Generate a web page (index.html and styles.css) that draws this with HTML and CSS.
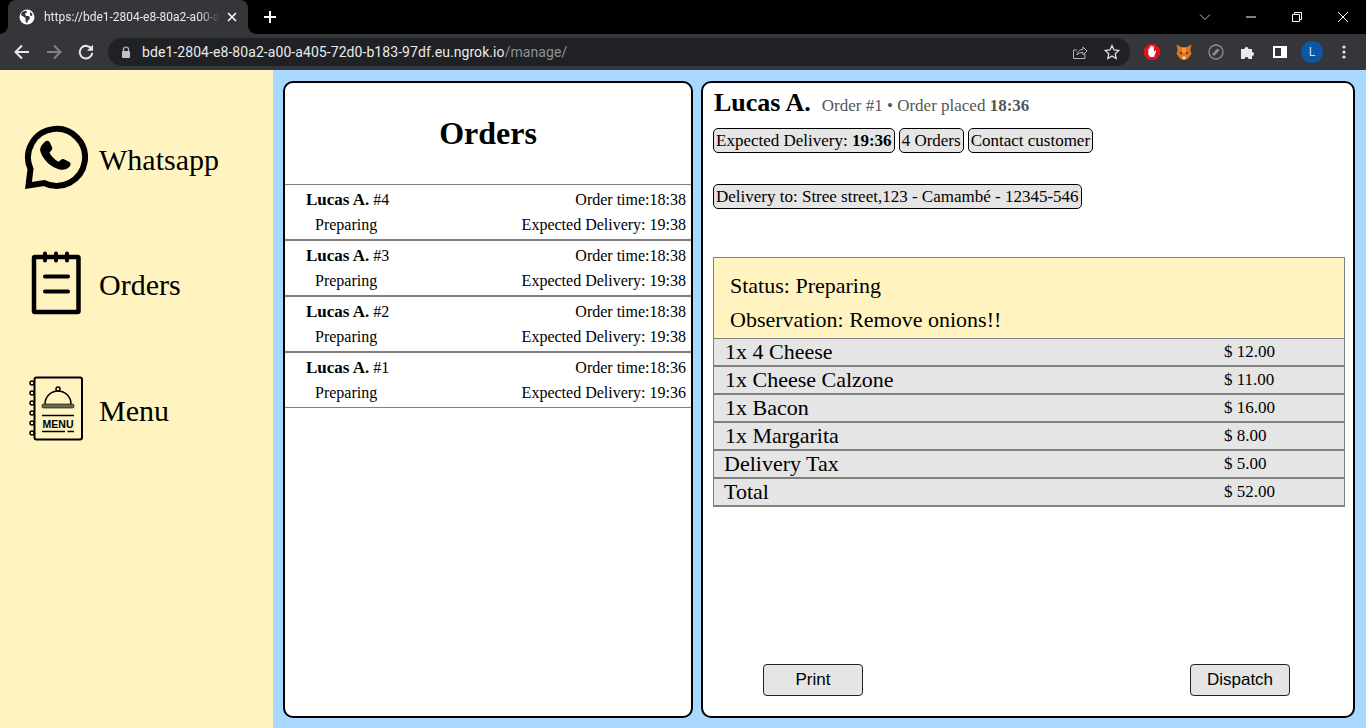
FILE: index.html
```html
<!DOCTYPE html>
<html lang="en">
<head>
  <meta charset="UTF-8" />
  <title>Manage</title>
  <link rel="stylesheet" href="styles.css">
</head>
<body>

  <!-- Browser chrome -->
  <div class="tabstrip">
    <div class="tab">
      <svg class="favicon" width="16" height="16" viewBox="0 0 16 16"><circle cx="8" cy="8" r="7.5" fill="#fff"/><path d="M7 1.500 3 3 2 6l3 2 1.500 1v3l1.500 2.500 1-3 2-2-1-2.500H7L6 4.500l2-1z" fill="#35363a"/><path d="M11 3l2.500 2-.5 2-2-.5z" fill="#35363a"/></svg>
      <span class="tab-title">https://bde1-2804-e8-80a2-a00-a</span>
      <svg class="tab-close" width="10" height="10" viewBox="0 0 10 10"><path d="M1 1l8 8M9 1L1 9" stroke="#fff" stroke-width="1.600"/></svg>
    </div>
    <svg class="new-tab" width="14" height="14" viewBox="0 0 14 14"><path d="M7 1v12M1 7h12" stroke="#fff" stroke-width="2"/></svg>
    <div class="window-btns">
      <div class="win-btn"><svg width="12" height="8" viewBox="0 0 12 8"><path d="M1 1.500l5 5 5-5" fill="none" stroke="#bbb"/></svg></div>
      <div class="win-btn"><svg width="12" height="12" viewBox="0 0 12 12"><path d="M1 6h10" stroke="#fff"/></svg></div>
      <div class="win-btn"><svg width="12" height="12" viewBox="0 0 12 12"><path d="M1.500 3.500h7v7h-7zM3.500 3.500v-2h7v7h-2" fill="none" stroke="#fff"/></svg></div>
      <div class="win-btn"><svg width="12" height="12" viewBox="0 0 12 12"><path d="M1 1l10 10M11 1L1 11" stroke="#fff"/></svg></div>
    </div>
  </div>

  <div class="toolbar">
    <div class="tool-btn"><svg width="16" height="16" viewBox="0 0 16 16"><path d="M15 8H2M8 1.500 1.500 8 8 14.500" fill="none" stroke="#e8eaed" stroke-width="2"/></svg></div>
    <div class="tool-btn"><svg width="16" height="16" viewBox="0 0 16 16"><path d="M1 8h13M8 1.500 14.500 8 8 14.500" fill="none" stroke="#7f8184" stroke-width="2"/></svg></div>
    <div class="tool-btn"><svg width="16" height="16" viewBox="0 0 16 16"><path d="M13.500 5A6.300 6.300 0 1 0 14.300 9" fill="none" stroke="#e8eaed" stroke-width="2"/><path d="M15 .8v6H9z" fill="#e8eaed"/></svg></div>

    <div class="omnibox">
      <svg class="lock" width="10" height="13" viewBox="0 0 10 13"><path d="M2.500 5V3.500a2.500 2.500 0 0 1 5 0V5" fill="none" stroke="#bdc1c6" stroke-width="1.200"/><rect x="1" y="5" width="8" height="7" rx="1" fill="#bdc1c6"/></svg>
      <span class="url">bde1-2804-e8-80a2-a00-a405-72d0-b183-97df.eu.ngrok.io<span class="url-path">/manage/</span></span>
      <svg class="omni-share" width="16" height="16" viewBox="0 0 16 16"><path d="M13 10v4.500H1.500V6H5" fill="none" stroke="#b4b6b9"/><path d="M5 11c.5-4 3-5.500 6-5.500V3l4 4-4 4V8.500c-3 0-4.500.5-6 2.500z" fill="none" stroke="#b4b6b9"/></svg>
      <svg class="omni-star" width="16" height="16" viewBox="0 0 16 16"><path d="M8 1.500l2 4.500 4.800.5-3.600 3.200 1 4.800L8 12.100l-4.200 2.400 1-4.800L1.200 6.500 6 6z" fill="none" stroke="#dcdde0" stroke-width="1.300"/></svg>
    </div>

    <div class="tool-btn"><svg width="16" height="16" viewBox="0 0 16 16"><path d="M5 0h6l5 5v6l-5 5H5l-5-5V5z" fill="#e6121b"/><path d="M4.300 8.500V5.200a.7.700 0 0 1 1.400 0V2.900a.7.700 0 0 1 1.400 0V2.300a.7.700 0 0 1 1.400 0V3a.7.700 0 0 1 1.400 0v5l.9-1.200c.6-.7 1.600-.1 1.200.7L10 13H6.200L4.300 10.500z" fill="#fff"/></svg></div>
    <div class="tool-btn"><svg width="16" height="16" viewBox="0 0 16 16"><path d="M.5.500 6 3.500h4L15.500.500 14.300 6 15.500 9.500 13.500 13l-3 2.500h-5L2.500 13 .5 9.500 1.700 6z" fill="#e2761b"/><path d="M3.500 8l2.800.5-1 2zM12.500 8l-2.800.5 1 2z" fill="#3a2a20"/><path d="M6 3.500h4L9.300 9H6.700z" fill="#f6a04d"/><path d="M6 12.500h4l-1 3H7z" fill="#e8d8c8"/></svg></div>
    <div class="tool-btn"><svg width="16" height="16" viewBox="0 0 16 16"><circle cx="8" cy="8" r="7" fill="none" stroke="#8c8e91" stroke-width="1.300"/><path d="M5 11l5.500-5.500" stroke="#8c8e91" stroke-width="2.600"/></svg></div>
    <div class="tool-btn"><svg width="16" height="16" viewBox="0 0 16 16"><path d="M1 5h3.500a2 2 0 1 1 4 0H12v3a2 2 0 1 1 0 4v3H8.500a2 2 0 1 0-4 0H1z" fill="#e8eaed"/></svg></div>
    <div class="tool-btn"><svg width="14" height="12" viewBox="0 0 14 12"><path d="M0 0h14v12H0z" fill="#fff"/><path d="M2 2h6v8H2z" fill="#35363a"/></svg></div>
    <div class="tool-btn"><span class="avatar">L</span></div>
    <div class="tool-btn"><svg width="4" height="14" viewBox="0 0 4 14"><circle cx="2" cy="2" r="1.600" fill="#e8eaed"/><circle cx="2" cy="7" r="1.600" fill="#e8eaed"/><circle cx="2" cy="12" r="1.600" fill="#e8eaed"/></svg></div>
  </div>

  <div class="page">
    <!-- Menu lateral -->
    <nav class="sidebar">
      <a class="nav-item">
        <svg class="nav-icon" viewBox="24 124 64 72">
          <path d="M30.500 169 L28.500 185.500 L44 183 A28.500 28.500 0 1 0 30.500 169 Z" fill="none" stroke="#000" stroke-width="6"/>
          <path transform="translate(40.500 140.500) scale(1.120) translate(-42 -141)" d="M45 143c2-2.500 4.500-2.500 5.500 0l2 4.500c.5 1.500-1.500 3-2.500 4.500 2 3.500 4.500 6 8 8 1.500-1 3-3 4.500-2.500l4.500 2.200c2.500 1 2.500 3.500 0 5.500-3 2.500-6.500 2.500-11 .5C49 163 44 157 42 151c-1-3 1-6 3-8z" fill="#000"/>
        </svg>
        <span>Whatsapp</span>
      </a>
      <a class="nav-item">
        <svg class="nav-icon" viewBox="24 249.500 64 72">
          <rect x="34" y="257.500" width="44.500" height="55" rx="1" fill="none" stroke="#000" stroke-width="4.500"/>
          <path d="M45 254v7M56 254v7M67 254v7" stroke="#000" stroke-width="4" stroke-linecap="round"/>
          <path d="M45 277h23M45 292h23" stroke="#000" stroke-width="4" stroke-linecap="round"/>
        </svg>
        <span>Orders</span>
      </a>
      <a class="nav-item">
        <svg class="nav-icon" viewBox="24 375 64 72">
          <rect x="34.500" y="377.500" width="47.500" height="62" rx="2" fill="none" stroke="#000" stroke-width="2"/>
          <g fill="#fff4bf" stroke="#000" stroke-width="1.500">
            <circle cx="32" cy="383" r="2"/><circle cx="32" cy="393" r="2"/><circle cx="32" cy="403" r="2"/>
            <circle cx="32" cy="413" r="2"/><circle cx="32" cy="423" r="2"/><circle cx="32" cy="433" r="2"/>
          </g>
          <path d="M45 404a13 13 0 0 1 26 0" fill="none" stroke="#000" stroke-width="1.500"/>
          <circle cx="58" cy="389" r="2" fill="none" stroke="#000" stroke-width="1.500"/>
          <rect x="42" y="404" width="32" height="4" rx="1.500" fill="#6b6850" stroke="#000" stroke-width=".6"/>
          <path d="M42 415.500h32" stroke="#000" stroke-width="1.500"/>
          <text class="menu-label" x="42.500" y="428" textLength="31" lengthAdjust="spacingAndGlyphs">MENU</text>
          <path d="M42 431.500h23M67.500 431.500H74" stroke="#000" stroke-width="1.500"/>
        </svg>
        <span>Menu</span>
      </a>
    </nav>

    <main class="content">
      <!-- Lista de pedidos -->
      <section class="panel orders">
        <h1 class="orders-title">Orders</h1>
        <div class="order-row">
          <span class="order-name"><b>Lucas A.</b> #4</span><span class="order-time">Order time:18:38</span>
          <span class="order-status">Preparing</span><span class="order-time">Expected Delivery: 19:38</span>
        </div>
        <div class="order-row">
          <span class="order-name"><b>Lucas A.</b> #3</span><span class="order-time">Order time:18:38</span>
          <span class="order-status">Preparing</span><span class="order-time">Expected Delivery: 19:38</span>
        </div>
        <div class="order-row">
          <span class="order-name"><b>Lucas A.</b> #2</span><span class="order-time">Order time:18:38</span>
          <span class="order-status">Preparing</span><span class="order-time">Expected Delivery: 19:38</span>
        </div>
        <div class="order-row">
          <span class="order-name"><b>Lucas A.</b> #1</span><span class="order-time">Order time:18:36</span>
          <span class="order-status">Preparing</span><span class="order-time">Expected Delivery: 19:36</span>
        </div>
      </section>

      <!-- Detalle del pedido -->
      <section class="panel detail">
        <div class="detail-head">
          <span class="customer">Lucas A.</span>
          <span class="order-meta">Order #1 • Order placed <b>18:36</b></span>
        </div>
        <div class="pills">
          <span class="pill">Expected Delivery: <b>19:36</b></span>
          <span class="pill">4 Orders</span>
          <span class="pill">Contact customer</span>
        </div>
        <div class="pills address">
          <span class="pill">Delivery to: Stree street,123 - Camambé - 12345-546</span>
        </div>

        <div class="ticket">
          <div class="ticket-note">
            <p>Status: Preparing</p>
            <p>Observation: Remove onions!!</p>
          </div>
          <div class="ticket-row"><span class="item-name">1x 4 Cheese</span><span class="item-price">$ 12.00</span></div>
          <div class="ticket-row"><span class="item-name">1x Cheese Calzone</span><span class="item-price">$ 11.00</span></div>
          <div class="ticket-row"><span class="item-name">1x Bacon</span><span class="item-price">$ 16.00</span></div>
          <div class="ticket-row"><span class="item-name">1x Margarita</span><span class="item-price">$ 8.00</span></div>
          <div class="ticket-row extra"><span class="item-name">Delivery Tax</span><span class="item-price">$ 5.00</span></div>
          <div class="ticket-row extra"><span class="item-name">Total</span><span class="item-price">$ 52.00</span></div>
        </div>

        <div class="actions">
          <button>Print</button>
          <button>Dispatch</button>
        </div>
      </section>
    </main>
  </div>

</body>
</html>
```

FILE: styles.css
```css
:root {
  --yellow: #fff4bf;
  --blue: #a8d8ff;
  --grey-bg: #e5e5e5;
  --line: #808080;
  --chrome: #35363a;
}

* {
  box-sizing: border-box;
}

html, body {
  height: 100%;
}

body {
  margin: 0;
  display: flex;
  flex-direction: column;
  overflow: hidden;
  font-family: "Liberation Serif", serif;
  color: #000;
  background: var(--blue);
}

/* Browser chrome */
.tabstrip {
  height: 34px;
  display: flex;
  align-items: center;
  background: #000;
  padding-left: 8px;
}

.tab {
  position: relative;
  width: 240px;
  height: 34px;
  display: flex;
  align-items: center;
  padding: 0 11px;
  background: var(--chrome);
  border-radius: 8px 8px 0 0;
  color: #e8eaed;
  font-family: Roboto, sans-serif;
  font-size: 12px;
}

/* curva de abajo de la pestaña */
.tab::before,
.tab::after {
  content: "";
  position: absolute;
  bottom: 0;
  width: 8px;
  height: 8px;
}

.tab::before {
  left: -8px;
  background: radial-gradient(circle at 0 0, #000 7.5px, var(--chrome) 8px);
}

.tab::after {
  right: -8px;
  background: radial-gradient(circle at 100% 0, #000 7.5px, var(--chrome) 8px);
}

.favicon {
  flex: none;
}

.tab-title {
  flex: 1;
  margin: 0 7px 0 9px;
  white-space: nowrap;
  -webkit-mask-image: linear-gradient(to right, #000 88%, transparent);
  mask-image: linear-gradient(to right, #000 88%, transparent);
}

.tab-close {
  flex: none;
}

.new-tab {
  margin-left: 15px;
}

.window-btns {
  margin-left: auto;
  display: flex;
}

.win-btn {
  width: 46px;
  height: 28px;
  display: flex;
  align-items: center;
  justify-content: center;
}

.toolbar {
  height: 36px;
  display: flex;
  align-items: center;
  padding: 0 6px;
  background: var(--chrome);
}

.tool-btn {
  flex: none;
  width: 32px;
  height: 32px;
  display: flex;
  align-items: center;
  justify-content: center;
}

.omnibox {
  flex: 1;
  height: 28px;
  margin: 0 6px;
  display: flex;
  align-items: center;
  padding: 0 10px 0 13px;
  background: #202124;
  border-radius: 14px;
  font-family: Roboto, sans-serif;
  font-size: 14px;
  color: #e8eaed;
}

.url {
  margin-left: 11px;
  white-space: nowrap;
  letter-spacing: 0.07px;
}

.url-path {
  color: #8e9195;
}

.omni-share {
  margin-left: auto;
}

.omni-star {
  margin-left: 16px;
}

.avatar {
  width: 22px;
  height: 22px;
  display: flex;
  align-items: center;
  justify-content: center;
  border-radius: 50%;
  background: #0b57a4;
  color: #c6dcf5;
  font-family: Roboto, sans-serif;
  font-size: 12px;
}

/* Page */
.page {
  flex: 1;
  min-height: 0;
  display: flex;
}

.sidebar {
  flex: none;
  width: 273px;
  padding-top: 27px;
  background: var(--yellow);
}

.nav-item {
  height: 125.5px;
  display: flex;
  align-items: center;
  gap: 11px;
  padding-left: 24px;
  font-size: 30px;
}

.nav-icon {
  flex: none;
  width: 64px;
  height: 72px;
}

.menu-label {
  font-family: "Liberation Sans", sans-serif;
  font-size: 11px;
  font-weight: bold;
}

.content {
  flex: 1;
  min-width: 0;
  display: grid;
  grid-template-columns: 410px 1fr;
  gap: 8px;
  padding: 11px 11px 10px 10px;
}

.panel {
  background: #fff;
  border: 2px solid #000;
  border-radius: 10px;
  font-size: 16px;
}

/* Orders list */
.orders-title {
  height: 101px;
  margin: 0;
  display: flex;
  align-items: center;
  justify-content: center;
  font-size: 32px;
}

.order-row {
  height: 56px;
  display: grid;
  grid-template-columns: 1fr auto;
  grid-template-rows: 28px 22px;
  align-items: center;
  padding: 1px 5px 1px 21px;
  border-top: 1px solid var(--line);
  border-bottom: 1px solid var(--line);
}

.order-name b {
  font-size: 17px;
}

.order-status {
  padding-left: 9px;
}

.order-time {
  text-align: right;
}

/* Order detail */
.detail {
  display: flex;
  flex-direction: column;
  padding: 5px 8px 20px 10px;
  font-size: 17px;
}

.detail-head {
  height: 35px;
  display: flex;
  align-items: baseline;
  gap: 11px;
  padding-left: 1px;
}

.customer {
  font-size: 26px;
  font-weight: bold;
}

.order-meta {
  color: #555;
}

.pills {
  display: flex;
  gap: 4px;
  margin-top: 5px;
}

.pill {
  padding: 1px 2px;
  line-height: 21px;
  background: var(--grey-bg);
  border: 1px solid #000;
  border-radius: 5px;
}

.address {
  margin-top: 31px;
}

.ticket {
  margin-top: 48px;
}

.ticket-note {
  height: 81px;
  padding: 11px 16px 0;
  background: var(--yellow);
  border: 1px solid var(--line);
  border-bottom: none;
  font-size: 22px;
}

.ticket-note p {
  margin: 0;
  line-height: 34px;
}

.ticket-row {
  height: 28px;
  display: flex;
  align-items: center;
  justify-content: space-between;
  padding-left: 11px;
  background: var(--grey-bg);
  border: 1px solid var(--line);
}

.ticket-row:last-child {
  height: 29px;
  border-bottom-width: 2px;
}

.ticket-row.extra {
  padding-left: 10px;
}

.item-name {
  font-size: 22px;
}

.item-price {
  width: 120px;
}

.actions {
  margin-top: auto;
  display: flex;
  justify-content: space-between;
  padding: 0 55px 0 50px;
}

.actions button {
  width: 100px;
  height: 32px;
  background: var(--grey-bg);
  border: 1px solid #222;
  border-radius: 4px;
  font-family: "Liberation Sans", sans-serif;
  font-size: 17px;
}
```
